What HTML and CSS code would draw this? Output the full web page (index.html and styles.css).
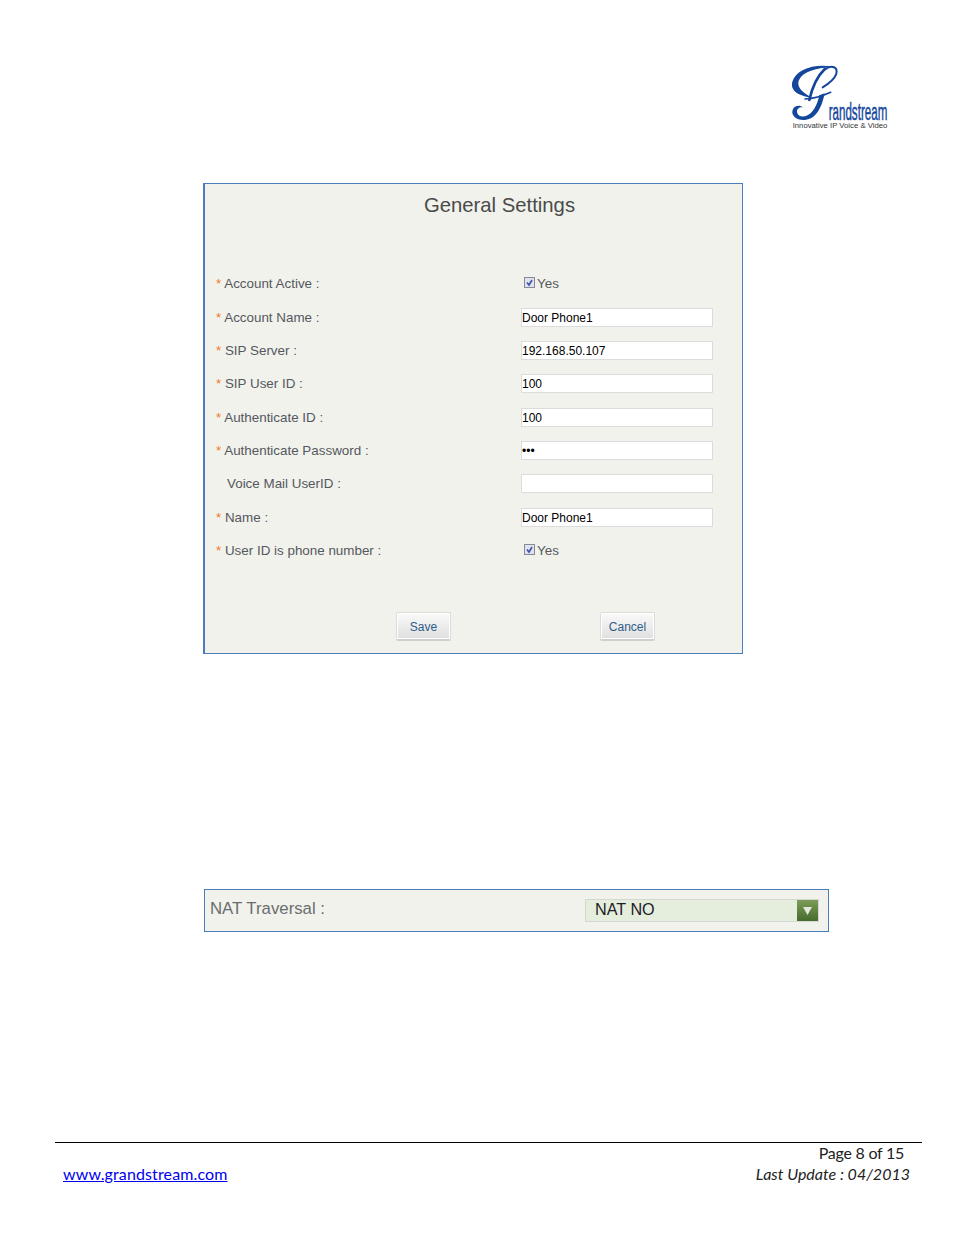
FILE: index.html
```html
<!DOCTYPE html>
<html lang="en">
<head>
<meta charset="utf-8">
<title>General Settings</title>
<link rel="stylesheet" href="styles.css">
</head>
<body>
<div class="page">
  <header class="top">
    <svg class="logo" width="140" height="90" viewBox="0 0 420 270" aria-label="Grandstream">
      <path class="swirl" d="M188 50C130 40 78 60 67 95C60 122 85 137 128 144C98 128 80 112 86 92C96 66 135 54 188 50Z"/>
      <path class="stroke" stroke-width="8" d="M165 56C140 80 125 118 118 150"/>
      <path class="stroke" stroke-width="6" d="M165 58C185 44 206 50 198 74C192 90 178 100 158 112"/>
      <path class="stroke" stroke-width="5" d="M105 147C130 146 158 138 182 127"/>
      <path class="swirl" d="M148 136L164 130C156 170 140 207 105 210C80 212 60 196 69 177C75 166 90 164 99 172C88 170 80 177 81 186C83 198 95 202 108 198C128 192 142 165 148 136Z"/>
      <text class="brand" transform="translate(176 211) scale(.47 1)">randstream</text>
      <text class="tag" x="68" y="235" textLength="284" lengthAdjust="spacingAndGlyphs">Innovative IP Voice &amp; Video</text>
    </svg>
  </header>

  <section class="panel settings">
    <h1 class="title">General Settings</h1>
    <form class="rows">
      <div class="label"><span class="req">*</span> Account Active :</div>
      <div class="check"><svg class="box" width="11" height="11" viewBox="0 0 11 11"><rect x=".5" y=".5" width="10" height="10" fill="#dfe3ee" stroke="#858a96"/><path d="M3 5.500l2 2.500 3-5" fill="none" stroke="#3f52a5" stroke-width="1.600"/></svg>Yes</div>

      <div class="label"><span class="req">*</span> Account Name :</div>
      <input class="field" type="text" value="Door Phone1">

      <div class="label"><span class="req">*</span> SIP Server :</div>
      <input class="field" type="text" value="192.168.50.107">

      <div class="label"><span class="req">*</span> SIP User ID :</div>
      <input class="field" type="text" value="100">

      <div class="label"><span class="req">*</span> Authenticate ID :</div>
      <input class="field" type="text" value="100">

      <div class="label"><span class="req">*</span> Authenticate Password :</div>
      <input class="field" type="password" value="100">

      <div class="label optional">Voice Mail UserID :</div>
      <input class="field" type="text" value="">

      <div class="label"><span class="req">*</span> Name :</div>
      <input class="field" type="text" value="Door Phone1">

      <div class="label"><span class="req">*</span> User ID is phone number :</div>
      <div class="check"><svg class="box" width="11" height="11" viewBox="0 0 11 11"><rect x=".5" y=".5" width="10" height="10" fill="#dfe3ee" stroke="#858a96"/><path d="M3 5.500l2 2.500 3-5" fill="none" stroke="#3f52a5" stroke-width="1.600"/></svg>Yes</div>
    </form>
    <div class="actions">
      <button class="btn" type="button">Save</button>
      <button class="btn" type="button">Cancel</button>
    </div>
  </section>

  <section class="panel nat">
    <div class="nat-label">NAT Traversal :</div>
    <div class="select">
      <span class="select-value">NAT NO</span>
      <span class="select-arrow"><svg width="9" height="8" viewBox="0 0 9 8"><path d="M0 0h9L4.500 8z" fill="#e3e8dc"/></svg></span>
    </div>
  </section>

  <footer class="foot">
    <div class="page-no">Page 8 of 15</div>
    <div class="foot-row">
      <a class="site" href="#">www.grandstream.com</a>
      <em class="updated">Last Update : 04/2013</em>
    </div>
  </footer>
</div>
</body>
</html>
```
FILE: styles.css
```css
html, body {
  margin: 0;
  padding: 0;
  background: #fff;
}
.page {
  width: 954px;
  height: 1235px;
  display: flex;
  flex-direction: column;
  font-family: "Liberation Sans", Arial, sans-serif;
  overflow: hidden;
}
.top {
  display: flex;
  justify-content: flex-end;
  padding: 50px 44px 0 0;
  height: 183px;
  box-sizing: border-box;
}
.logo { display: block; }
.swirl { fill: #14469c; }
.stroke {
  fill: none;
  stroke: #14469c;
  stroke-linecap: round;
}
.brand {
  font-family: "Liberation Sans", sans-serif;
  font-size: 74px;
  fill: #14469c;
  stroke: #14469c;
  stroke-width: 1.500px;
}
.tag {
  font-family: "Liberation Sans", sans-serif;
  font-size: 21px;
  fill: #333;
}
.panel {
  background: #f1f2eb;
  border: 1px solid #4a7ebb;
  box-sizing: border-box;
}
.settings {
  width: 540px;
  height: 471px;
  margin-left: 203px;
  border-left-width: 2px;
  display: flex;
  flex-direction: column;
}
.title {
  margin: 0;
  padding: 9px 0 0 0;
  height: 74px;
  box-sizing: border-box;
  text-align: center;
  font-weight: normal;
  font-size: 20.300px;
  line-height: 24px;
  color: #4b4b4b;
  transform: translateX(26px);
}
.rows {
  margin-top: 9px;
  display: grid;
  grid-template-columns: 305px 192px;
  grid-auto-rows: 33.375px;
  align-items: center;
  padding-left: 11px;
}
.label {
  font-size: 13.400px;
  color: #55585f;
  white-space: nowrap;
}
.req { color: #f07a1c; }
.optional { padding-left: 11px; }
.check {
  display: flex;
  align-items: center;
  padding-left: 3px;
  font-size: 13.400px;
  color: #55585f;
}
.box { margin-right: 2px; margin-top: -2px; }
.field {
  width: 192px;
  height: 19px;
  box-sizing: border-box;
  margin: 0;
  padding: 1px 0 0 0;
  border: 1px solid #dcdcdc;
  background: #fff;
  font-family: "Liberation Sans", sans-serif;
  font-size: 12px;
  color: #000;
  outline: none;
}
.actions {
  margin-top: 45px;
  display: flex;
  gap: 149px;
  padding-left: 191px;
}
.btn {
  width: 55px;
  height: 29px;
  box-sizing: border-box;
  padding: 1px 0 0 0;
  border: 1px solid #dcdcd8;
  border-bottom: 2px solid #cfcfcb;
  border-radius: 2px;
  background: linear-gradient(#fafafa, #dedfde);
  box-shadow: inset 0 0 0 1px #fff;
  font-family: "Liberation Sans", sans-serif;
  font-size: 12px;
  color: #2f5d8a;
}
.nat {
  width: 625px;
  height: 43px;
  margin: 235px 0 0 204px;
  display: flex;
  align-items: center;
  justify-content: space-between;
  padding: 0 9px 0 5px;
}
.nat-label {
  font-size: 16.800px;
  color: #6a6d70;
  margin-top: -4px;
}
.select {
  width: 234px;
  height: 23px;
  box-sizing: border-box;
  border: 1px solid #d5d8d2;
  background: #e5eddd;
  display: flex;
  align-items: center;
  justify-content: space-between;
}
.select-value {
  padding: 0 0 2px 9px;
  font-size: 16.200px;
  color: #1c1c28;
}
.select-arrow {
  width: 21px;
  height: 21px;
  display: flex;
  align-items: center;
  justify-content: center;
  background: linear-gradient(#7d9c58, #466b2c);
}
.foot {
  width: 867px;
  margin: 210px 0 0 55px;
  border-top: 1px solid #000;
  font-family: Lato, "Open Sans", sans-serif;
  font-size: 16px;
  color: #222;
}
.page-no {
  text-align: right;
  padding-right: 18px;
  line-height: 20px;
  letter-spacing: -0.250px;
}
.foot-row {
  display: flex;
  justify-content: space-between;
  padding: 0 12px 0 8px;
  line-height: 22px;
}
.site { color: #0000ee; text-decoration: underline; letter-spacing: 0.120px; }
.updated { font-style: italic; }
```
